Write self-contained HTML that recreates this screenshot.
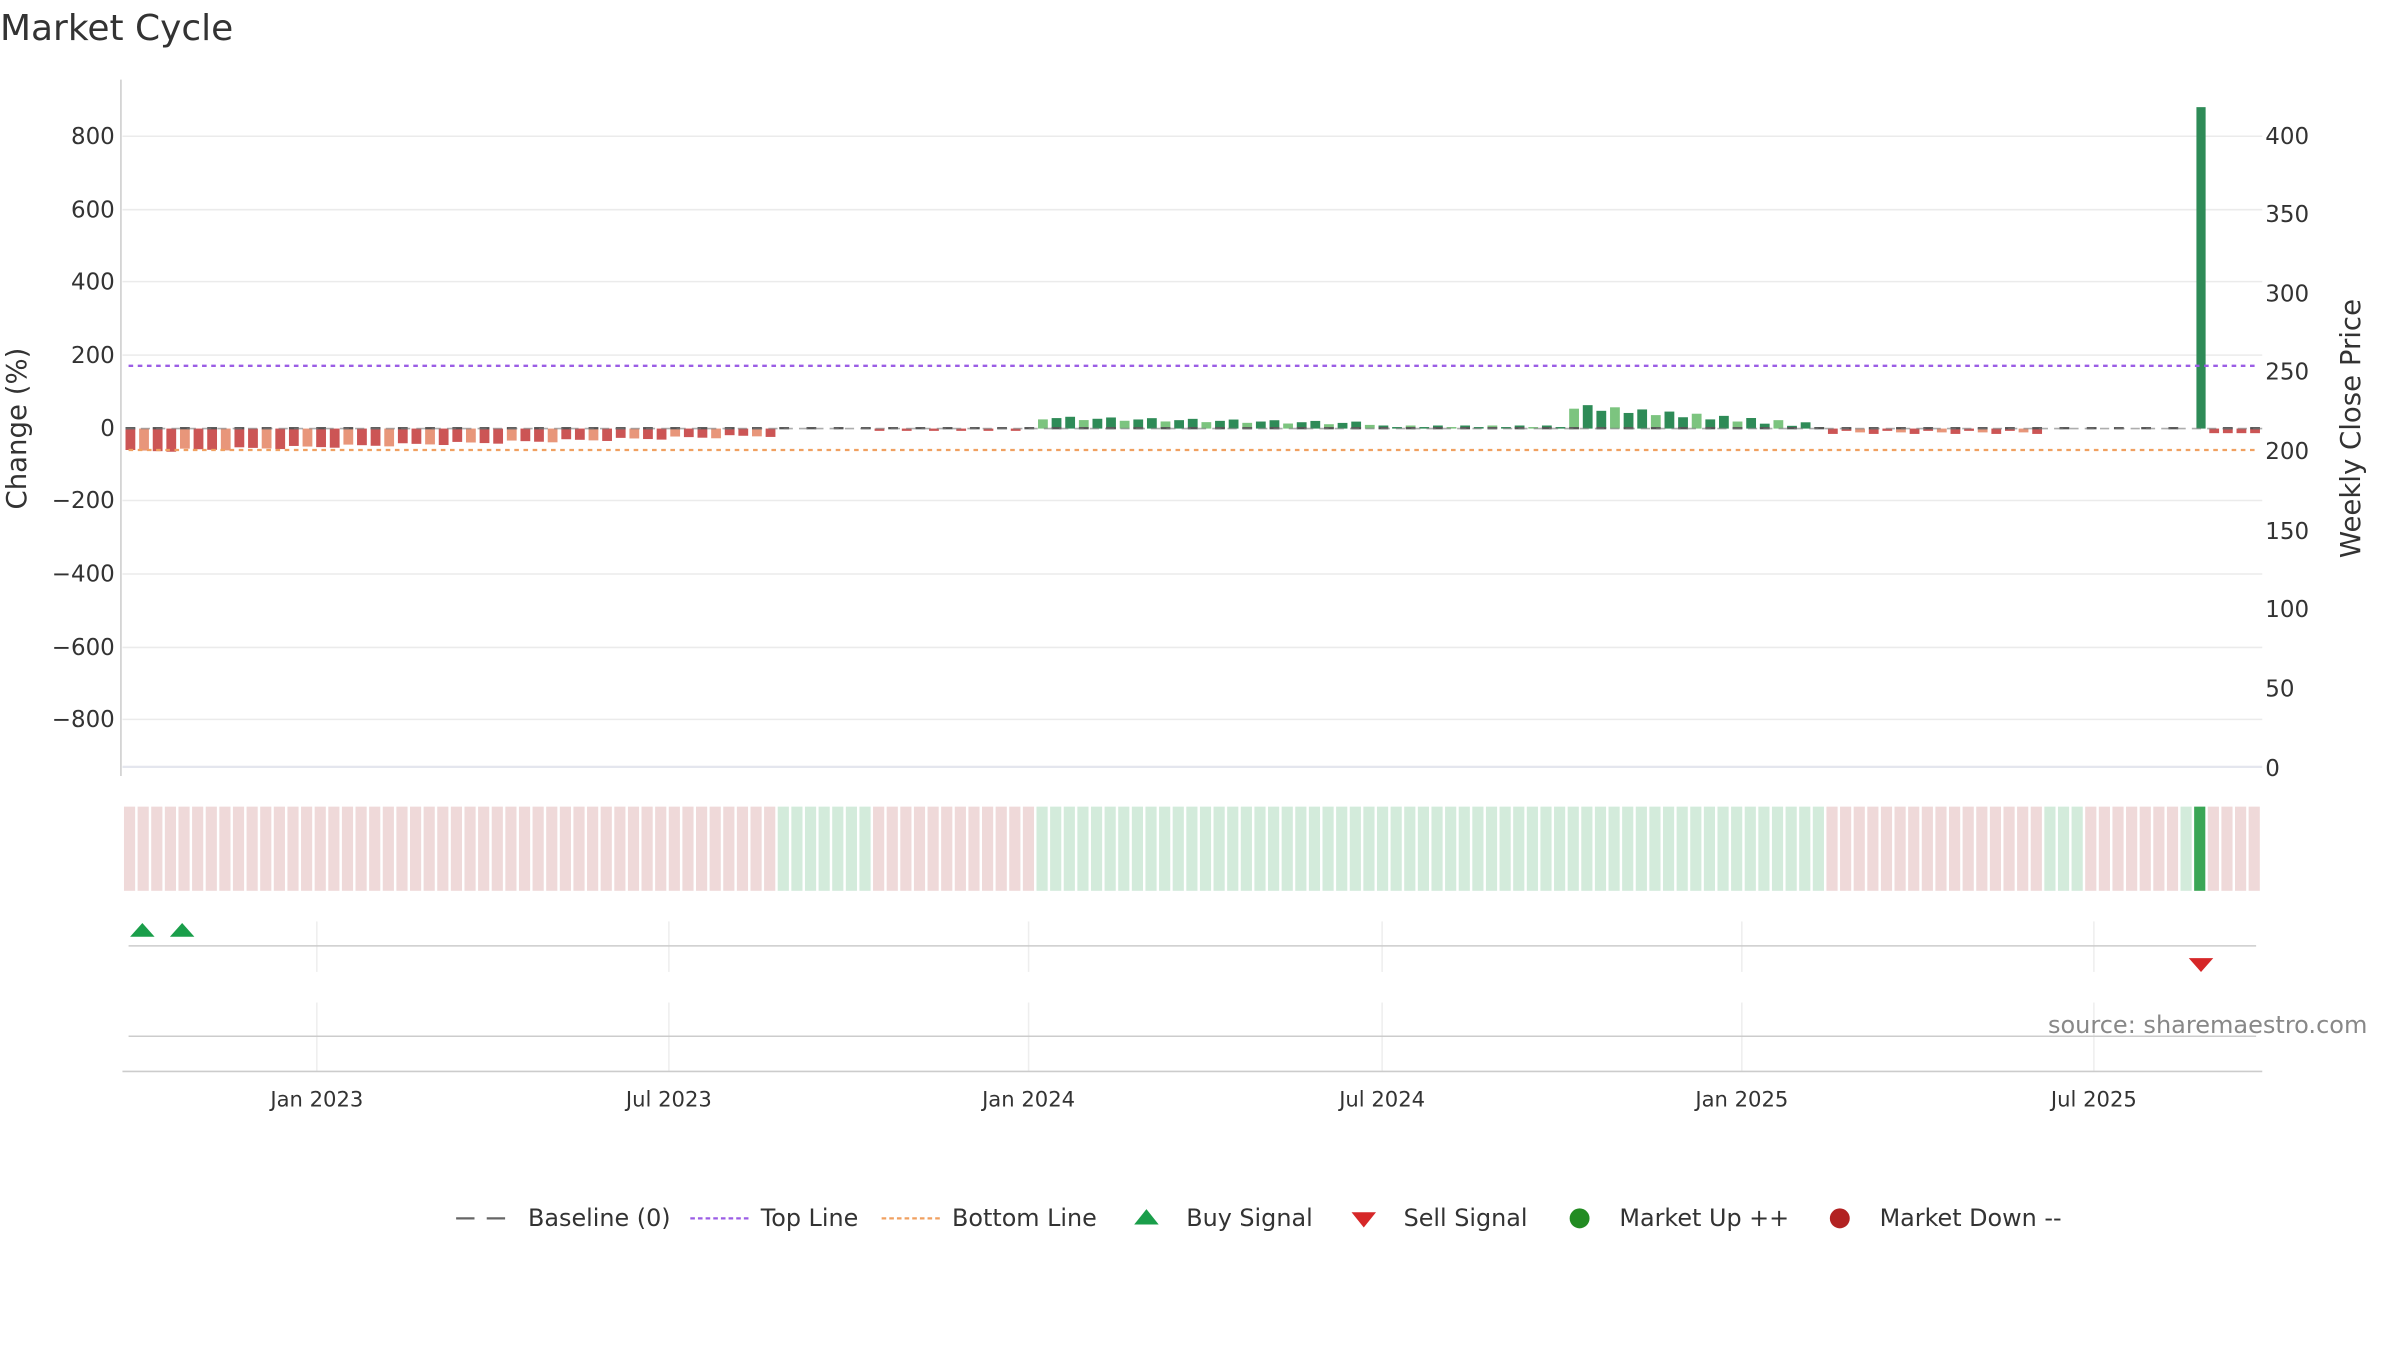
<!DOCTYPE html>
<html><head><meta charset="utf-8"><style>
html,body{margin:0;padding:0;background:#fff;width:2400px;height:1350px;overflow:hidden}
svg{display:block}
text{font-family:"DejaVu Sans","Liberation Sans",sans-serif;fill:#333}
</style></head><body>
<svg id="s" width="2400" height="1350" viewBox="0 0 1568 882" preserveAspectRatio="none" xmlns="http://www.w3.org/2000/svg">
<text x="0" y="26" font-size="23.5" fill="#333">Market Cycle</text>
<g stroke="#ebebeb" stroke-width="1">
<line x1="80" x2="1478" y1="89" y2="89"/><line x1="80" x2="1478" y1="137" y2="137"/>
<line x1="80" x2="1478" y1="184" y2="184"/><line x1="80" x2="1478" y1="232" y2="232"/>
<line x1="80" x2="1478" y1="327" y2="327"/><line x1="80" x2="1478" y1="375" y2="375"/>
<line x1="80" x2="1478" y1="423" y2="423"/><line x1="80" x2="1478" y1="470" y2="470"/>
<line x1="80" x2="1478" y1="501" y2="501" stroke="#e4e6ee" stroke-width="1.5"/>
</g>
<line x1="79" y1="52" x2="79" y2="507" stroke="#ccc" stroke-width="1"/>
<g font-size="15" text-anchor="end">
<text x="75" y="94">800</text><text x="75" y="142">600</text><text x="75" y="189">400</text>
<text x="75" y="237">200</text><text x="75" y="285">0</text><text x="75" y="332">−200</text>
<text x="75" y="380">−400</text><text x="75" y="428">−600</text><text x="75" y="475">−800</text>
</g>
<g font-size="15">
<text x="1480" y="94">400</text><text x="1480" y="145">350</text><text x="1480" y="197">300</text>
<text x="1480" y="248">250</text><text x="1480" y="300">200</text><text x="1480" y="352">150</text>
<text x="1480" y="403">100</text><text x="1480" y="455">50</text><text x="1480" y="507">0</text>
</g>
<text font-size="18" transform="translate(17,280) rotate(-90)" text-anchor="middle">Change (%)</text>
<text font-size="18" transform="translate(1542,280) rotate(-90)" text-anchor="middle">Weekly Close Price</text>
<g id="bars"></g>
<line x1="82" x2="1478" y1="280" y2="280" stroke="#777" stroke-width="1" stroke-dasharray="6,4" opacity=".6"/>
<line x1="84" x2="1474" y1="239" y2="239" stroke="#9b5de5" stroke-width="1.5" stroke-dasharray="3,3"/>
<line x1="84" x2="1474" y1="294" y2="294" stroke="#f0a060" stroke-width="1.5" stroke-dasharray="3,3"/>
<g id="strip"></g>
<g stroke="#eee" stroke-width="1">
<line x1="207" x2="207" y1="602" y2="635"/><line x1="437" x2="437" y1="602" y2="635"/>
<line x1="672" x2="672" y1="602" y2="635"/><line x1="903" x2="903" y1="602" y2="635"/>
<line x1="1138" x2="1138" y1="602" y2="635"/><line x1="1368" x2="1368" y1="602" y2="635"/>
<line x1="207" x2="207" y1="655" y2="700"/><line x1="437" x2="437" y1="655" y2="700"/>
<line x1="672" x2="672" y1="655" y2="700"/><line x1="903" x2="903" y1="655" y2="700"/>
<line x1="1138" x2="1138" y1="655" y2="700"/><line x1="1368" x2="1368" y1="655" y2="700"/>
</g>
<line x1="84" x2="1474" y1="618" y2="618" stroke="#ccc"/>
<line x1="84" x2="1474" y1="677" y2="677" stroke="#ccc"/>
<line x1="80" x2="1478" y1="700" y2="700" stroke="#ccc"/>
<polygon points="85,612 93,603 101,612" fill="#1a9e4a"/>
<polygon points="111,612 119,603 127,612" fill="#1a9e4a"/>
<polygon points="1430,626 1446,626 1438,635" fill="#d62728"/>
<text x="1338" y="675" font-size="15.7" fill="#888" style="fill:#888">source: sharemaestro.com</text>
<g font-size="13.8" text-anchor="middle">
<text x="207" y="723">Jan 2023</text><text x="437" y="723">Jul 2023</text><text x="672" y="723">Jan 2024</text>
<text x="903" y="723">Jul 2024</text><text x="1138" y="723">Jan 2025</text><text x="1368" y="723">Jul 2025</text>
</g>
<g font-size="15.6">
<line x1="298" x2="338" y1="796" y2="796" stroke="#666" stroke-width="1.5" stroke-dasharray="12,8"/>
<text x="345" y="801">Baseline (0)</text>
<line x1="451" x2="489" y1="796" y2="796" stroke="#9b5de5" stroke-width="1.5" stroke-dasharray="3,2"/>
<text x="497" y="801">Top Line</text>
<line x1="576" x2="614" y1="796" y2="796" stroke="#f0a060" stroke-width="1.5" stroke-dasharray="3,2"/>
<text x="622" y="801">Bottom Line</text>
<polygon points="741,800 749,790 757,800" fill="#1a9e4a"/>
<text x="775" y="801">Buy Signal</text>
<polygon points="883,792 899,792 891,802" fill="#d62728"/>
<text x="917" y="801">Sell Signal</text>
<circle cx="1032" cy="796" r="6.5" fill="#228b22"/>
<text x="1058" y="801">Market Up ++</text>
<circle cx="1202" cy="796" r="6.5" fill="#b22222"/>
<text x="1228" y="801">Market Down --</text>
</g>
</svg>
<script>
var NS="http://www.w3.org/2000/svg";
var bars=document.getElementById("bars"),strip=document.getElementById("strip");
function r(x,y,w,h,c,p){var e=document.createElementNS(NS,"rect");e.setAttribute("x",x);e.setAttribute("y",y);e.setAttribute("width",w);e.setAttribute("height",h);e.setAttribute("fill",c);p.appendChild(e);}
var segs=[[48,'r'],[7,'g'],[12,'r'],[58,'g'],[16,'r'],[3,'g'],[7,'r'],[1,'g'],[1,'G'],[4,'r']];
var types=[];segs.forEach(function(s){for(var i=0;i<s[0];i++)types.push(s[1]);});
var N=types.length,x0=81,pitch=(1478-81)/N;
for(var i=0;i<N;i++){var x=x0+i*pitch,t=types[i];
 var c=t=='r'?'#efd9d9':(t=='G'?'#3aa655':'#d3ebdb');
 r(x,527,pitch-1.6,55,c,strip);}
for(var i=0;i<N;i++){var x=x0+i*pitch+1,w=pitch-2.5,h=0,col;
 var alt=i%3==1;
 if(i<48){h=14-i*0.22+(i%4)*0.6; if(h<2)h=2; col=alt?'#e8967a':'#cc5555';r(x,280,w,h,col,bars);}
 else if(i<55){}
 else if(i<67){if(i%2)r(x,280,w,1.5,'#cc5555',bars);}
 else if(i<125){var k=i-67;
   if(k<25)h=6-k*0.15+(k%3);
   else if(k<39)h=1+(k%2);
   else h=Math.max(1,16-(k-39)*0.7-(k%2)*3);
   col=alt?'#7cc47f':'#2e8b57';r(x,280-h,w,h,col,bars);}
 else if(i<141){h=1.5+(i%3);col=alt?'#e8967a':'#cc5555';r(x,280,w,h,col,bars);}
 else if(i==152){r(1435,70,6,210,'#2e8b57',bars);}
 else if(i>152){r(x,280,w,3,'#cc5555',bars);}
 if(i%2==0&&i!=152){r(x,279,w,1.5,'#555',bars);}
}
</script>
</body></html>
